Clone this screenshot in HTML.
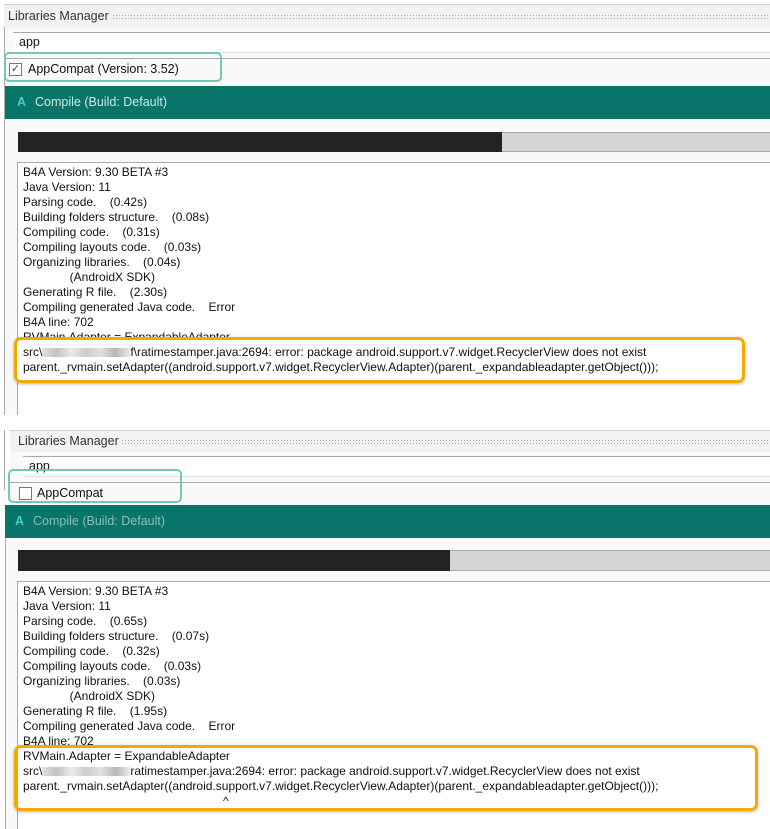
<!DOCTYPE html>
<html><head><meta charset="utf-8"><style>
*{margin:0;padding:0;box-sizing:border-box}
body{width:770px;height:829px;background:#fff;position:relative;overflow:hidden;font-family:"Liberation Sans",sans-serif;font-size:12px;color:#111}
.a{position:absolute}
.hdr{background:#f2f2f2;border-top:1px solid #d0d0d0}
.dots{position:absolute;height:6px;background-image:radial-gradient(#aaa 0.6px,transparent 0.8px);background-size:3px 3px}
.teal{background:#09756a;color:#cfe8e4;font-size:12.5px}
.teal b{color:#3fd0bb;font-weight:bold;margin-right:9px}
.log{line-height:15px;white-space:pre;font-size:12px}
.hl{border:2px solid #6fcab7;border-radius:5px}
.or{border:3px solid #f5a800;border-radius:7px;box-shadow:0 1px 3px rgba(0,0,0,.3)}
.blur{display:inline-block;width:88px;height:9px;background:linear-gradient(90deg,#ccc,#999,#ddd,#aaa,#ccc,#888,#ddd);vertical-align:middle;opacity:.6}
</style></head><body>
<!-- Panel 1 -->
<div class="a" style="left:4px;top:4px;width:766px;height:411px;border-left:1px solid #aaa;background:#f9f9f9"></div>
<div class="a hdr" style="left:4px;top:4px;width:766px;height:23px"></div>
<div class="a" style="left:8px;top:9px;font-size:12.5px;color:#333">Libraries Manager</div>
<div class="dots" style="left:112px;top:14px;width:658px"></div>
<div class="a" style="left:13px;top:32px;width:757px;height:21px;background:#fff;border-top:1px solid #aaa;border-bottom:1px solid #dde4ee"></div>
<div class="a" style="left:19px;top:35px;font-size:12.5px">app</div>
<div class="a" style="left:5px;top:58px;width:765px;height:1px;background:#aaa"></div>
<div class="a" style="left:9px;top:63px;width:13px;height:13px;border:1px solid #777;background:#fff;font-size:11px;line-height:11px;text-align:center;color:#444">✓</div>
<div class="a" style="left:28px;top:62px;font-size:12.5px">AppCompat (Version: 3.52)</div>
<div class="a hl" style="left:4px;top:52px;width:218px;height:30px"></div>
<div class="a teal" style="left:5px;top:86px;width:765px;height:33px;padding:9px 0 0 12px"><b>A</b>Compile (Build: Default)</div>
<div class="a" style="left:18px;top:132px;width:752px;height:20px;background:#d5d5d5;border-top:1px solid #aaa;border-bottom:1px solid #aaa"></div>
<div class="a" style="left:18px;top:132px;width:484px;height:20px;background:#232323"></div>
<div class="a" style="left:17px;top:162px;width:753px;height:253px;background:#fff;border-top:1px solid #aaa;border-left:1px solid #aaa"></div>
<div class="a log" style="left:23px;top:165px">B4A Version: 9.30 BETA #3
Java Version: 11
Parsing code.    (0.42s)
Building folders structure.    (0.08s)
Compiling code.    (0.31s)
Compiling layouts code.    (0.03s)
Organizing libraries.    (0.04s)
              (AndroidX SDK)
Generating R file.    (2.30s)
Compiling generated Java code.    Error
B4A line: 702
RVMain.Adapter = ExpandableAdapter</div>
<div class="a" style="left:17px;top:340px;width:725px;height:40px;background:#fff"></div>
<div class="a log" style="left:23px;top:345px">src\<span class="blur"></span>f\ratimestamper.java:2694: error: package android.support.v7.widget.RecyclerView does not exist
parent._rvmain.setAdapter((android.support.v7.widget.RecyclerView.Adapter)(parent._expandableadapter.getObject()));</div>
<div class="a or" style="left:14px;top:337px;width:731px;height:46px"></div>

<!-- Panel 2 -->
<div class="a" style="left:4px;top:430px;width:1px;height:60px;background:#aaa"></div>
<div class="a" style="left:10px;top:430px;width:760px;height:75px;background:#f9f9f9"></div>
<div class="a hdr" style="left:10px;top:430px;width:760px;height:22px"></div>
<div class="a" style="left:18px;top:434px;font-size:12.5px;color:#333">Libraries Manager</div>
<div class="dots" style="left:121px;top:439px;width:649px"></div>
<div class="a" style="left:23px;top:456px;width:747px;height:21px;background:#fff;border-top:1px solid #aaa;border-bottom:1px solid #dde4ee"></div>
<div class="a" style="left:29px;top:459px;font-size:12.5px">app</div>
<div class="a" style="left:10px;top:482px;width:760px;height:1px;background:#aaa"></div>
<div class="a" style="left:19px;top:487px;width:13px;height:13px;border:1px solid #777;background:#fff"></div>
<div class="a" style="left:37px;top:486px;font-size:12.5px">AppCompat</div>
<div class="a hl" style="left:8px;top:469px;width:174px;height:34px"></div>
<div class="a teal" style="left:5px;top:505px;width:765px;height:33px;padding:9px 0 0 10px;color:#8fbdb6"><b>A</b>Compile (Build: Default)</div>
<div class="a" style="left:5px;top:538px;width:765px;height:291px;background:#f9f9f9;border-left:1px solid #aaa"></div>
<div class="a" style="left:18px;top:550px;width:752px;height:21px;background:#d5d5d5;border-top:1px solid #aaa;border-bottom:1px solid #aaa"></div>
<div class="a" style="left:18px;top:550px;width:432px;height:21px;background:#232323"></div>
<div class="a" style="left:17px;top:581px;width:753px;height:248px;background:#fff;border-top:1px solid #aaa;border-left:1px solid #aaa"></div>
<div class="a log" style="left:23px;top:584px">B4A Version: 9.30 BETA #3
Java Version: 11
Parsing code.    (0.65s)
Building folders structure.    (0.07s)
Compiling code.    (0.32s)
Compiling layouts code.    (0.03s)
Organizing libraries.    (0.03s)
              (AndroidX SDK)
Generating R file.    (1.95s)
Compiling generated Java code.    Error
B4A line: 702
RVMain.Adapter = ExpandableAdapter
src\<span class="blur"></span>ratimestamper.java:2694: error: package android.support.v7.widget.RecyclerView does not exist
parent._rvmain.setAdapter((android.support.v7.widget.RecyclerView.Adapter)(parent._expandableadapter.getObject()));
                                                            ^</div>
<div class="a or" style="left:14px;top:745px;width:744px;height:66px"></div>
</body></html>
